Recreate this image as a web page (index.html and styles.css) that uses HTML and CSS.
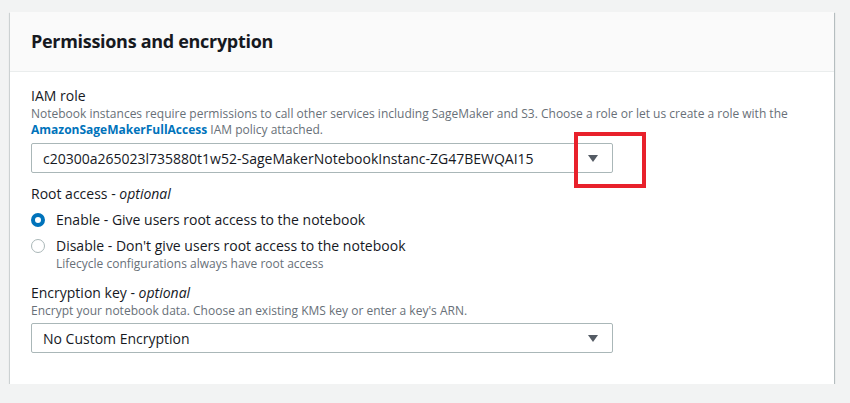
FILE: index.html
```html
<!DOCTYPE html>
<html lang="en">
<head>
    <meta charset="UTF-8">
    <meta name="viewport" content="width=device-width, initial-scale=1.0">
    <title>Permissions and encryption</title>
    <link rel="stylesheet" href="styles.css">
</head>
<body>
    <div class="panel">
        <div class="panel-header">
            <h2>Permissions and encryption</h2>
        </div>
        <div class="panel-body">
            <div class="field">
                <div class="label">IAM role</div>
                <div class="description">
                    Notebook instances require permissions to call other services including SageMaker and S3. Choose a role or let us create a role with the
                    <a href="#">AmazonSageMakerFullAccess</a> IAM policy attached.
                </div>
                <div class="select select-role">
                    <span class="select-value">c20300a265023l735880t1w52-SageMakerNotebookInstanc-ZG47BEWQAI15</span>
                    <span class="caret"></span>
                    <div class="highlight"></div>
                </div>
            </div>

            <div class="field field-root">
                <div class="label">Root access - <i>optional</i></div>
                <label class="radio checked">
                    <span class="radio-dot"></span>
                    <span>Enable - Give users root access to the notebook</span>
                </label>
                <label class="radio">
                    <span class="radio-dot"></span>
                    <span>Disable - Don't give users root access to the notebook</span>
                </label>
                <div class="description radio-note">Lifecycle configurations always have root access</div>
            </div>

            <div class="field field-key">
                <div class="label">Encryption key - <i>optional</i></div>
                <div class="description">Encrypt your notebook data. Choose an existing KMS key or enter a key's ARN.</div>
                <div class="select select-key">
                    <span class="select-value">No Custom Encryption</span>
                    <span class="caret"></span>
                </div>
            </div>
        </div>
    </div>
</body>
</html>
```

FILE: styles.css
```css
body {
    margin: 0;
    padding: 12px 16px 0 10px;
    background-color: #f2f3f3;
    font-family: 'Open Sans', sans-serif;
    color: #16191f;
}

.panel {
    width: 824px;
    background-color: #fff;
    box-shadow: 0 1px 1px 0 rgba(0, 28, 36, 0.35), 1px 1px 1px 0 rgba(0, 28, 36, 0.2), -1px 1px 1px 0 rgba(0, 28, 36, 0.1);
}

.panel-header {
    height: 59px;
    background-color: #fafafa;
    border-bottom: 1px solid #eaeded;
    display: flex;
    align-items: center;
    padding-left: 21px;
}

.panel-header h2 {
    margin: 0 0 1px 0;
    font-size: 18px;
    font-weight: 700;
    letter-spacing: -0.3px;
}

.panel-body {
    padding: 14px 21px 31px 21px;
}

.label {
    font-size: 14px;
    line-height: 20px;
}

.description {
    font-size: 12px;
    line-height: 16px;
    color: #687078;
}

.description a {
    color: #0073bb;
    font-weight: 700;
    text-decoration: none;
}

.select {
    position: relative;
    width: 582px;
    height: 30px;
    box-sizing: border-box;
    border: 1px solid #aab7b8;
    border-radius: 2px;
    display: flex;
    align-items: center;
    justify-content: space-between;
    padding: 0 14px 0 11px;
    font-size: 14px;
}

.select-role {
    margin-top: 5px;
}

.select-key {
    margin-top: 4px;
}

.caret {
    width: 0;
    height: 0;
    border-left: 5px solid transparent;
    border-right: 5px solid transparent;
    border-top: 7px solid #545b64;
}

.highlight {
    position: absolute;
    left: 542px;
    top: -12px;
    width: 72px;
    height: 56px;
    box-sizing: border-box;
    border: 4px solid #e8212b;
}

.field-root {
    margin-top: 11px;
}

.radio {
    display: flex;
    align-items: center;
    gap: 11px;
    font-size: 14px;
    line-height: 20px;
    margin-top: 6px;
}

.radio-dot {
    width: 14px;
    height: 14px;
    box-sizing: border-box;
    border: 1px solid #aab7b8;
    border-radius: 50%;
    flex-shrink: 0;
}

.radio.checked .radio-dot {
    border: 4px solid #0073bb;
}

.radio-note {
    padding-left: 25px;
}

.field-key {
    margin-top: 11px;
}
```
